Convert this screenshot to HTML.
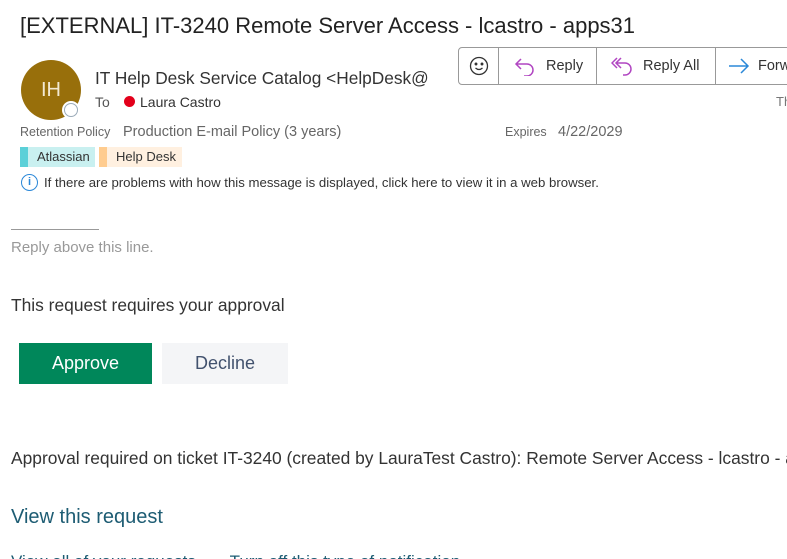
<!DOCTYPE html>
<html><head><meta charset="utf-8"><style>
body{margin:0;width:787px;height:559px;overflow:hidden;background:#fff;font-family:"Liberation Sans",sans-serif;position:relative}
.w{position:absolute;left:0;top:0;width:787px;height:559px;overflow:hidden}
.a{position:absolute;white-space:nowrap}
</style></head><body><div class="w">
<div class="a" style="left:20px;top:13px;font-size:22px;color:#222">[EXTERNAL] IT-3240 Remote Server Access - lcastro - apps31</div>
<div class="a" style="left:21px;top:60px;width:60px;height:60px;border-radius:50%;background:#986f0b;color:#f3e9d2;font-size:20px;line-height:60px;text-align:center">IH</div>
<div class="a" style="left:64px;top:103px;width:14px;height:14px;border-radius:50%;background:#fff;border:1px solid #9aaab8;box-sizing:border-box;box-shadow:0 0 0 2px #fff"></div>
<div class="a" style="left:95px;top:68px;font-size:17.3px;color:#333">IT Help Desk Service Catalog &lt;HelpDesk@</div>
<div class="a" style="left:95px;top:94px;font-size:14px;color:#555">To</div>
<div class="a" style="left:124px;top:96px;width:11px;height:11px;border-radius:50%;background:#e3001b"></div>
<div class="a" style="left:140px;top:94px;font-size:14px;color:#333">Laura Castro</div>
<div class="a" style="left:458px;top:47px;width:340px;height:38px;border:1px solid #999;border-radius:4px;box-sizing:border-box;display:flex">
 <div style="width:39px;border-right:1px solid #999;display:flex;align-items:center;justify-content:center"><svg width="20" height="20" viewBox="0 0 20 20" fill="none" stroke="#333" stroke-width="1.3"><circle cx="10" cy="10" r="8.5"/><circle cx="7" cy="8" r=".8" fill="#333"/><circle cx="13" cy="8" r=".8" fill="#333"/><path d="M6.5 12q3.5 3 7 0"/></svg></div>
 <div style="width:97px;border-right:1px solid #999;display:flex;align-items:center;font-size:14.5px;color:#333"><svg style="margin:0 10px 0 15px" width="22" height="20" viewBox="0 0 22 20" fill="none" stroke="#b146c2" stroke-width="1.5"><path d="M7 3L2 8l5 5M2 8h11a6 6 0 0 1 0 12h-3"/></svg>Reply</div>
 <div style="width:118px;border-right:1px solid #999;display:flex;align-items:center;font-size:14.5px;color:#333"><svg style="margin:0 10px 0 14px" width="22" height="20" viewBox="0 0 22 20" fill="none" stroke="#b146c2" stroke-width="1.5"><path d="M6 2L1 7l5 5M10 2L5 7l5 5M5 7h9a6 6 0 0 1 0 12h-2"/></svg>Reply All</div>
 <div style="display:flex;align-items:center;font-size:14.5px;color:#333"><svg style="margin:0 8px 0 12px" width="22" height="20" viewBox="0 0 22 20" fill="none" stroke="#2b88d8" stroke-width="1.5"><path d="M1 10h19M13 3l7 7-7 7"/></svg>Forw</div>
</div>
<div class="a" style="left:776px;top:94px;font-size:13px;color:#777">Th</div>
<div class="a" style="left:20px;top:125px;font-size:12.5px;color:#666">Retention Policy</div>
<div class="a" style="left:123px;top:124px;font-size:14.5px;color:#666">Production E-mail Policy (3 years)</div>
<div class="a" style="left:505px;top:125px;font-size:12.5px;color:#666">Expires</div>
<div class="a" style="left:558px;top:124px;font-size:14.5px;color:#666">4/22/2029</div>
<div class="a" style="left:20px;top:147px;width:75px;height:20px;background:#c9f0f0;border-left:8px solid #5bd0d8;box-sizing:border-box;font-size:13px;color:#333;line-height:20px;padding-left:9px">Atlassian</div>
<div class="a" style="left:99px;top:147px;width:83px;height:20px;background:#fff0e0;border-left:8px solid #ffcc8f;box-sizing:border-box;font-size:13px;color:#333;line-height:20px;padding-left:9px">Help Desk</div>
<div class="a" style="left:21px;top:174px;width:17px;height:17px;border:1.5px solid #2b88d8;border-radius:50%;box-sizing:border-box;color:#2b88d8;font-size:11px;font-weight:bold;text-align:center;line-height:14px">i</div>
<div class="a" style="left:44px;top:175px;font-size:13.2px;color:#333">If there are problems with how this message is displayed, click here to view it in a web browser.</div>
<div class="a" style="left:11px;top:229px;width:88px;height:1px;background:#999"></div>
<div class="a" style="left:11px;top:239px;font-size:15px;color:#999">Reply above this line.</div>
<div class="a" style="left:11px;top:295px;font-size:17.4px;color:#333">This request requires your approval</div>
<div class="a" style="left:19px;top:343px;width:133px;height:41px;background:#00875a;color:#fff;font-size:18px;text-align:center;line-height:41px">Approve</div>
<div class="a" style="left:162px;top:343px;width:126px;height:41px;background:#f4f5f7;color:#42526e;font-size:18px;text-align:center;line-height:41px">Decline</div>
<div class="a" style="left:11px;top:448px;font-size:17.4px;color:#333">Approval required on ticket IT-3240 (created by LauraTest Castro): Remote Server Access - lcastro - apps31</div>
<div class="a" style="left:11px;top:506px;font-size:20px;color:#1d5c73">View this request</div>
<div class="a" style="left:11px;top:552px;font-size:17px;color:#1d5c73">View all of your requests &nbsp; · &nbsp; Turn off this type of notification</div>
</div></body></html>
